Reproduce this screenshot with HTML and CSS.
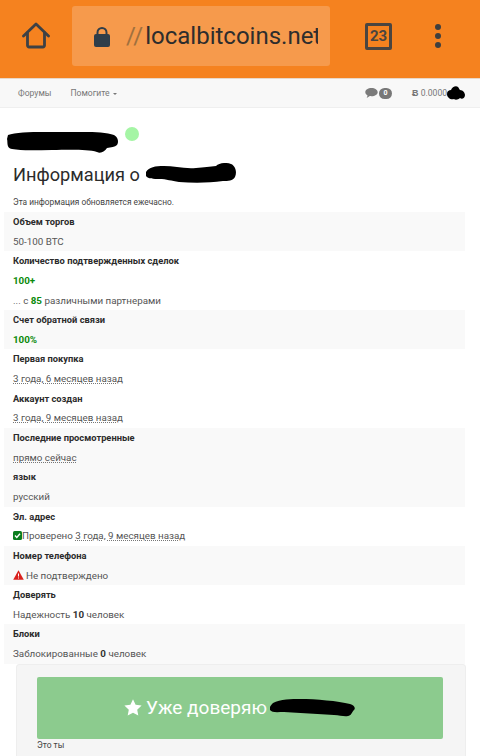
FILE: index.html
```html
<!DOCTYPE html>
<html lang="ru">
<head>
  <meta charset="UTF-8" />
  <meta name="viewport" content="width=device-width, initial-scale=1.0" />
  <title>Информация</title>
  <link rel="stylesheet" href="styles.css">
</head>
<body>
  <header class="toolbar">
    <button class="tool-btn home-btn" aria-label="Домой">
      <svg width="28" height="28" viewBox="0 0 28 28" fill="none" stroke="#3d4145" stroke-width="2.800" stroke-linejoin="round" stroke-linecap="round">
        <path d="M1.500 14 14 2 26.500 14"/>
        <path d="M5.500 11v12.500a1.500 1.500 0 0 0 1.500 1.500h14a1.500 1.500 0 0 0 1.500-1.500V11"/>
      </svg>
    </button>
    <div class="address">
      <svg class="lock" width="18" height="22" viewBox="0 0 18 22">
        <path d="M4.500 9V6.500a4.500 4.500 0 0 1 9 0V9" fill="none" stroke="#2f3e4a" stroke-width="2"/>
        <rect x="1" y="8" width="16" height="13" rx="2" fill="#2f3e4a"/>
      </svg>
      <div class="url"><span class="scheme">//</span>localbitcoins.net</div>
    </div>
    <div class="tabs">23</div>
    <div class="dots"><i></i><i></i><i></i></div>
  </header>

  <nav class="navbar">
    <a>Форумы</a>
    <a>Помогите <span class="caret"></span></a>
    <span class="nav-right">
      <svg width="13" height="12" viewBox="0 0 13 12"><path d="M6.500 1C3 1 .3 2.900.3 5.200c0 1.300.9 2.500 2.300 3.200L1.700 11l3.100-1.900c.5.1 1.100.1 1.700.1 3.500 0 6.200-1.800 6.200-4S10 1 6.500 1z" fill="#7b7b7b"/></svg>
      <span class="badge">0</span>
    </span>
    <span class="balance"><b>Ƀ</b> 0.0000</span>
  </nav>
  <svg class="blob blob-nav" width="20" height="16" viewBox="0 0 20 16"><path d="M1 9c0-3 2-4 4-4 1-3 5-5 7-3 1 1 1 2 2 3 3 0 5 3 5 5 0 3-3 5-5 3-2 2-5 2-6 1-3 1-7-1-7-5z"/></svg>

  <main class="content">
    <div class="user-line">
      <span class="online"></span>
    </div>
    <h2 class="title">Информация о</h2>
    <p class="note">Эта информация обновляется ежечасно.</p>

    <div class="row shade">
      <div class="label">Объем торгов</div>
      <div class="value">50-100 BTC</div>
    </div>
    <div class="row">
      <div class="label">Количество подтвержденных сделок</div>
      <div class="value good">100+</div>
      <div class="value">... с <b class="good">85</b> различными партнерами</div>
    </div>
    <div class="row shade">
      <div class="label">Счет обратной связи</div>
      <div class="value good">100%</div>
    </div>
    <div class="row">
      <div class="label">Первая покупка</div>
      <div class="value"><span class="dated">3 года, 6 месяцев назад</span></div>
    </div>
    <div class="row">
      <div class="label">Аккаунт создан</div>
      <div class="value"><span class="dated">3 года, 9 месяцев назад</span></div>
    </div>
    <div class="row shade">
      <div class="label">Последние просмотренные</div>
      <div class="value"><span class="dated">прямо сейчас</span></div>
    </div>
    <div class="row shade">
      <div class="label">язык</div>
      <div class="value">русский</div>
    </div>
    <div class="row">
      <div class="label">Эл. адрес</div>
      <div class="value">
        <svg class="check" width="9" height="9" viewBox="0 0 9 9"><rect width="9" height="9" rx="1.500" fill="#0a7d1e"/><path d="M2 4.600 3.800 6.400 7 2.800" fill="none" stroke="#fff" stroke-width="1.400"/></svg>Проверено <span class="dated">3 года, 9 месяцев назад</span>
      </div>
    </div>
    <div class="row shade">
      <div class="label">Номер телефона</div>
      <div class="value">
        <svg class="warn" width="11" height="10" viewBox="0 0 11 10"><path d="M5.500.3 10.800 9.700H.2z" fill="#d9201c"/><path d="M5.500 3.500v3M5.500 7.500v1" stroke="#fff" stroke-width="1"/></svg>Не подтверждено
      </div>
    </div>
    <div class="row">
      <div class="label">Доверять</div>
      <div class="value">Надежность <b>10</b> человек</div>
    </div>
    <div class="row shade">
      <div class="label">Блоки</div>
      <div class="value">Заблокированные <b>0</b> человек</div>
    </div>

    <div class="trust-panel">
      <button class="trust-btn">
        <svg width="18" height="17" viewBox="0 0 18 17"><path d="M9 .3l2.600 5.500 6 .8-4.400 4.100 1.100 5.900L9 13.800l-5.300 2.800 1.100-5.900L.4 6.600l6-.8z" fill="#fff"/></svg>
        Уже доверяю
      </button>
      <div class="its-you">Это ты</div>
    </div>
  </main>

  <!-- redaction scribbles drawn over the names -->
  <svg class="blob blob-name" width="114" height="24" viewBox="0 0 114 24"><path d="M2 5C12 1 40 2 60 2c16 0 38-1 48 3 4 2 5 7 3 10-2 2-6 2-10 3-2 3-6 6-10 4-10-3-30-2-45-2-14 0-30 1-40-1C0 18 2 12 1 9z"/></svg>
  <svg class="blob blob-about" width="92" height="22" viewBox="0 0 92 22"><path d="M1 9c3-5 9-6 18-6 10 0 20 3 32 2 8-1 14-1 20-2 3-3 10-4 15-2 5 2 6 9 4 13-2 4-7 4-12 4-14 2-30 2-44 1-8-1-12-3-20-3-5 0-11 0-13-3z"/></svg>
  <svg class="blob blob-btn" width="86" height="19" viewBox="0 0 86 19"><path d="M3 5C10 1 22 1 30 1c16 0 38 2 50 5 4 1 6 4 4 6-2 2-3 6-6 6-4 1-8-1-14-1-16-1-34-2-50-3-6 0-12 1-14-2C-1 9 1 7 3 5z"/></svg>
</body>
</html>
```
FILE: styles.css
```css
body {
  margin: 0;
  width: 480px;
  height: 756px;
  overflow: hidden;
  position: relative;
  background: #fff;
  font-family: 'Roboto', sans-serif;
  color: #333;
}

.toolbar {
  display: flex;
  align-items: center;
  height: 78px;
  background: #f5821f;
  box-sizing: border-box;
  padding: 0 0 6px 22px;
}

.tool-btn {
  background: none;
  border: none;
  padding: 0;
  width: 28px;
  height: 28px;
}

.address {
  display: flex;
  align-items: center;
  box-sizing: border-box;
  width: 258px;
  height: 60px;
  margin-left: 22px;
  padding-left: 21px;
  background: #f69a4c;
  border-radius: 3px;
}

.lock {
  flex: none;
  margin-top: 1px;
}

.url {
  margin-left: 15px;
  width: 192px;
  overflow: hidden;
  white-space: nowrap;
  font-size: 24px;
  color: #2d2d2d;
}

.scheme {
  color: #a0703e;
  margin-right: 2px;
}

.tabs {
  box-sizing: border-box;
  width: 27px;
  height: 27px;
  margin-left: 35px;
  border: 3px solid #4a4540;
  border-radius: 2px;
  font-size: 15px;
  font-weight: 700;
  line-height: 21px;
  text-align: center;
  color: #4a4540;
}

.dots {
  display: flex;
  flex-direction: column;
  gap: 3px;
  margin-left: 43px;
}

.dots i {
  display: block;
  width: 6px;
  height: 6px;
  border-radius: 50%;
  background: #3f3f3f;
}

.navbar {
  display: flex;
  align-items: center;
  height: 30px;
  box-sizing: border-box;
  padding: 0 0 0 18px;
  background: #f8f8f8;
  border-top: 1px solid #e8d8c8;
  border-bottom: 1px solid #efefef;
  font-size: 8.600px;
  color: #777;
}

.navbar a {
  margin-right: 19px;
}

.caret {
  display: inline-block;
  margin-left: 1px;
  vertical-align: middle;
  border-top: 2.500px solid #777;
  border-left: 2.500px solid transparent;
  border-right: 2.500px solid transparent;
}

.nav-right {
  display: flex;
  align-items: center;
  gap: 1px;
  margin-left: auto;
}

.badge {
  width: 13px;
  height: 11px;
  border-radius: 6px;
  background: #777;
  color: #fff;
  font-size: 7px;
  font-weight: 700;
  line-height: 11px;
  text-align: center;
}

.balance {
  width: 68px;
  margin-left: 20px;
  white-space: nowrap;
}

.balance b {
  font-size: 9px;
}

.content {
  padding: 0 15px 0 4px;
}

.user-line {
  display: flex;
  align-items: center;
  height: 49px;
  padding: 0 0 0 121px;
}

.online {
  width: 14px;
  height: 14px;
  margin-top: 3px;
  border-radius: 50%;
  background: #a5f5a5;
}

.title {
  margin: 0 0 0 9px;
  height: 36px;
  font-size: 18.200px;
  font-weight: 400;
  line-height: 36px;
  color: #2b2b2b;
}

.note {
  margin: 0 0 0 9px;
  height: 19px;
  font-size: 8.350px;
  line-height: 19px;
  color: #444;
}

.row {
  padding: 0 9px;
}

.shade {
  background: #f9f9f9;
}

.label,
.value {
  height: 19.650px;
  line-height: 19.650px;
  white-space: nowrap;
}

.label {
  font-size: 9.300px;
  font-weight: 700;
  color: #2b2b2b;
}

.value {
  font-size: 9.800px;
  color: #555;
}

.value b {
  color: #333;
}

.value.good,
.value b.good {
  color: #0a8a0a;
  font-weight: 700;
}

.dated {
  text-decoration: underline dotted #777;
  text-underline-offset: 1px;
}

.check {
  vertical-align: -1px;
}

.warn {
  vertical-align: -1px;
  margin-right: 2px;
}

.trust-panel {
  box-sizing: border-box;
  margin-left: 12px;
  margin-right: -15px;
  width: 450px;
  height: 100px;
  padding: 12px 20px;
  background: #f5f5f5;
  border: 1px solid #eeeeee;
  border-radius: 3px;
}

.trust-btn {
  display: flex;
  align-items: center;
  gap: 4px;
  width: 406px;
  height: 62px;
  padding: 0 0 0 87px;
  border: none;
  border-radius: 2px;
  background: #8ccb8e;
  color: #fff;
  font-family: 'Roboto', sans-serif;
  font-size: 19px;
}

.its-you {
  margin-top: 1px;
  font-size: 8.500px;
  line-height: 11px;
  color: #444;
}

.blob {
  position: absolute;
  fill: #000;
}

.blob-nav {
  left: 446px;
  top: 85px;
}

.blob-name {
  left: 6px;
  top: 130px;
}

.blob-about {
  left: 145px;
  top: 163px;
}

.blob-btn {
  left: 270px;
  top: 698px;
}
```
